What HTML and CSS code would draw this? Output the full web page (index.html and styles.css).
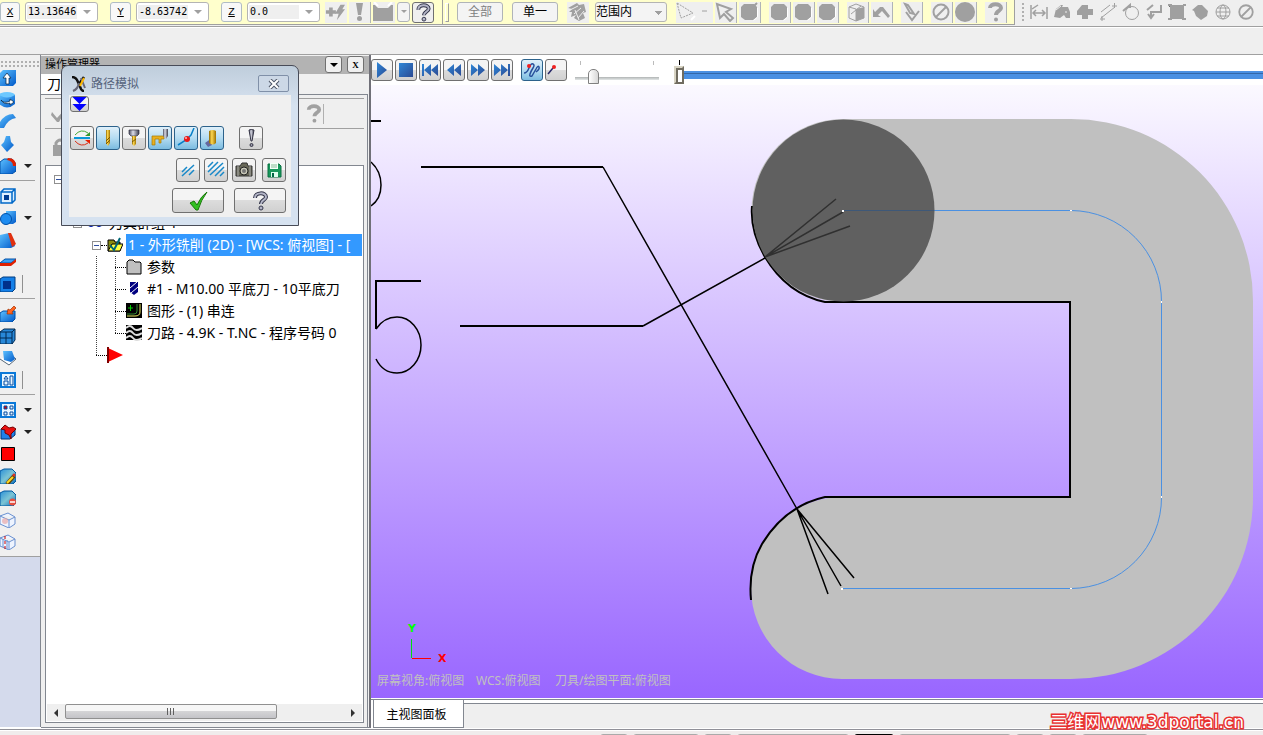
FILE: index.html
```html
<!DOCTYPE html>
<html lang="zh-CN">
<head>
<meta charset="utf-8">
<title>路径模拟</title>
<link rel="stylesheet" href="styles.css">
</head>
<body>
<svg class="defs" aria-hidden="true">
  <defs>
    <linearGradient id="blue" x1="0" y1="0" x2="1" y2="1"><stop offset="0" stop-color="#5cc0ff"/><stop offset="1" stop-color="#0058c8"/></linearGradient>
    <linearGradient id="teal" x1="0" y1="0" x2="1" y2="1"><stop offset="0" stop-color="#2a90d8"/><stop offset=".5" stop-color="#7cc4d4"/><stop offset="1" stop-color="#0868b8"/></linearGradient>
    <linearGradient id="play" x1="0" y1="0" x2="1" y2="1"><stop offset="0" stop-color="#2f86d6"/><stop offset="1" stop-color="#2a4a94"/></linearGradient>
    <linearGradient id="sky" x1="0" y1="0" x2="0" y2="1"><stop offset="0" stop-color="#fbf9ff"/><stop offset="1" stop-color="#9966ff"/></linearGradient>
    <linearGradient id="gold" x1="0" y1="0" x2="1" y2="0"><stop offset="0" stop-color="#8c6400"/><stop offset=".4" stop-color="#ffd850"/><stop offset="1" stop-color="#9c7000"/></linearGradient>
    <linearGradient id="steel" x1="0" y1="0" x2="1" y2="0"><stop offset="0" stop-color="#4a4c60"/><stop offset=".4" stop-color="#dcdde8"/><stop offset="1" stop-color="#3c3e50"/></linearGradient>
    <symbol id="hex" viewBox="0 0 20 20"><path d="M5 2h10l3 3v10l-4 3H6l-4-3V5z" fill="#a0a0a0"/><path d="M18.500 6v9l-4 3.500" fill="none" stroke="#fff"/></symbol>
    <symbol id="no" viewBox="0 0 20 20"><circle cx="10" cy="10" r="7.500" fill="none" stroke="#a0a0a0" stroke-width="2"/><path d="M5 15L15 5" stroke="#a0a0a0" stroke-width="2"/></symbol>
    <symbol id="qmark" viewBox="0 0 20 20"><path d="M5 6c0-5 11-5 11 0 0 3-5 3-5 7" fill="none" stroke="#a0a0a0" stroke-width="4"/><circle cx="11" cy="17.500" r="2" fill="#a0a0a0"/></symbol>
    <symbol id="help" viewBox="0 0 20 20"><path d="M5 7c0-6 11-6 11-1 0 3-5 3-5 7" fill="none" stroke="#34364a" stroke-width="4"/><path d="M5 7c0-6 11-6 11-1 0 3-5 3-5 7" fill="none" stroke="#b4b6c8" stroke-width="2"/><circle cx="11" cy="17" r="2" fill="#b4b6c8" stroke="#34364a"/></symbol>
  </defs>
</svg>

<header class="topbar">
  <div class="coords">
    <button class="axis first">X</button>
    <div class="combo"><input aria-label="X" value="13.13646"><button aria-label="X 列表" class="arrow"></button></div>
    <button class="axis">Y</button>
    <div class="combo"><input aria-label="Y" value="-8.63742"><button aria-label="Y 列表" class="arrow"></button></div>
    <button class="axis">Z</button>
    <div class="combo"><input aria-label="Z" value="0.0"><button aria-label="Z 列表" class="arrow"></button></div>
    <div class="set s1">
      <button class="ico" aria-label="快速点"><svg viewBox="0 0 22 20"><path d="M1 10h11M6.500 5v10" stroke="#a0a0a0" stroke-width="4"/><path d="M17 2h5l-3 5h3l-9 12 2-7h-4z" fill="#a0a0a0"/></svg></button>
      <button class="ico line" aria-label="选项"><svg viewBox="0 0 20 20"><path d="M7 1h7l-2 12H9z" fill="#a0a0a0"/><circle cx="10.500" cy="16.500" r="2.500" fill="#a0a0a0"/></svg></button>
      <button class="ico" aria-label="自动抓点"><svg viewBox="0 0 20 20"><path d="M0 3h2l3 3h10l3-3h2v16H0z" fill="#a0a0a0"/><path d="M1 0l4 4M19 0l-4 4" stroke="#fff" stroke-width="2"/></svg></button>
      <button class="mini arrow" aria-label="抓点列表"></button>
      <button class="ico framed" aria-label="帮助"><svg viewBox="0 0 20 20"><use href="#help"/></svg></button>
    </div>
  </div>
  <div class="selection">
    <i class="grip"></i>
    <button class="word dim">全部</button>
    <button class="word">单一</button>
    <button class="ico" aria-label="实体"><svg viewBox="0 0 20 20"><path d="M1 6l9-5 2 2 5-1 2 8-3 1 2 5-6 3-5-3 2-3-5 2 1-5-3 0 3-3z" fill="#a0a0a0"/><path d="M3 8l8-4M7 12l7-6M11 16l6-7M8 8l4 10" stroke="#eee"/></svg></button>
    <select aria-label="选择范围"><option>范围内</option></select>
    <div class="set s2">
      <button class="ico wide" aria-label="窗选"><svg viewBox="0 0 36 20"><path d="M1 1l4 15 12-5z" fill="none" stroke="#a0a0a0" stroke-dasharray="2 1"/><path d="M26 9h5" stroke="#a0a0a0"/><path d="M15 18l4-4" stroke="#fff" stroke-width="2"/></svg></button>
      <button class="ico line" aria-label="选择"><svg viewBox="0 0 20 20"><path d="M2 2l3 14 4-4 6 7 3-3-7-6 5-3z" fill="#efefef" stroke="#a0a0a0" stroke-width="2"/></svg></button>
      <button class="ico line" aria-label="标准选择"><svg viewBox="0 0 20 20"><use href="#hex"/><path d="M13 6l5-5" stroke="#a0a0a0" stroke-width="2"/></svg></button>
    </div>
    <div class="set s3">
      <button class="ico line" aria-label="边界"><svg viewBox="0 0 20 20"><use href="#hex"/></svg></button>
      <button class="ico line" aria-label="面"><svg viewBox="0 0 20 20"><use href="#hex"/></svg></button>
      <button class="ico line" aria-label="主体"><svg viewBox="0 0 20 20"><use href="#hex"/></svg></button>
    </div>
    <div class="set s4">
      <button class="ico line" aria-label="背面"><svg viewBox="0 0 20 20"><path d="M2 5l7-3 8 3v11l-8 3-7-3z" fill="#efefef" stroke="#a0a0a0"/><path d="M9 7l8-2v11l-8 3z" fill="#a0a0a0"/><path d="M2 5l7 2v12M4 12l10-8" stroke="#a0a0a0" fill="none"/></svg></button>
      <button class="ico line" aria-label="撤销"><svg viewBox="0 0 20 20"><path d="M2 7v8h8l-3-2 4-4 6 7 2-2-7-9h-3L4 10z" fill="#a0a0a0"/></svg></button>
    </div>
    <div class="set s4">
      <button class="ico line" aria-label="验证选择"><svg viewBox="0 0 20 20"><path d="M4 2l3 1 6 9-4-1zM5 10l6 8 7-9" fill="none" stroke="#a0a0a0" stroke-width="2"/></svg></button>
    </div>
    <div class="set s4">
      <button class="ico line" aria-label="取消"><svg viewBox="0 0 20 20"><use href="#no"/></svg></button>
      <button class="ico line" aria-label="确定"><svg viewBox="0 0 20 20"><circle cx="10" cy="10" r="10" fill="#a0a0a0"/></svg></button>
    </div>
    <div class="set s4">
      <button class="ico line" aria-label="选择帮助"><svg viewBox="0 0 20 20"><use href="#qmark"/></svg></button>
    </div>
  </div>
  <div class="analysis">
    <i class="dots"></i>
    <button aria-label="距离"><svg viewBox="0 0 18 18"><path d="M1 2v14M17 4v12M3 10h12M6 7l-3 3 3 3M12 7l3 3-3 3" fill="none" stroke="#a0a0a0" stroke-width="1.500"/><path d="M2 6l6-4" stroke="#a0a0a0" stroke-width="1.500"/></svg></button>
    <button aria-label="动态"><svg viewBox="0 0 18 18"><path d="M1 14L3 6l5-4h2l-1 2 6 0 2 5v6h-4l-2-3-4 3z" fill="#a0a0a0"/><path d="M3 7l5-4M12 9h2" stroke="#eee"/></svg></button>
    <button aria-label="体积"><svg viewBox="0 0 18 18"><path d="M1 8l5-6h6v4h5v6h-5v4H6v-4H1z" fill="#a0a0a0"/></svg></button>
    <button aria-label="串连"><svg viewBox="0 0 18 18"><path d="M2 15L16 4M2 9l9-7M1 16h5M13 3h5M15.500 0v5M3 13v5" fill="none" stroke="#a0a0a0"/></svg></button>
    <button aria-label="外形"><svg viewBox="0 0 18 18"><circle cx="10" cy="10" r="6.500" fill="none" stroke="#a0a0a0"/><path d="M1 8l7-6v3" fill="none" stroke="#a0a0a0" stroke-width="2"/></svg></button>
    <button aria-label="角度"><svg viewBox="0 0 18 18"><path d="M16 2v7H6v6M3 11l3 4 3-4M2 7l6-5" fill="none" stroke="#a0a0a0" stroke-width="2"/></svg></button>
    <button aria-label="曲面"><svg viewBox="0 0 18 18"><path d="M2 2h14v14H2z" fill="#a0a0a0"/><path d="M0 2h3v3M15 2h3M0 16h4M14 16h4" stroke="#a0a0a0" stroke-width="2"/></svg></button>
    <button aria-label="实体检查"><svg viewBox="0 0 18 18"><path d="M1 7l6-5h4l6 6-1 5-6 4-5-4-2-5z" fill="#a0a0a0"/></svg></button>
    <button aria-label="网格"><svg viewBox="0 0 18 18"><circle cx="9" cy="9" r="7" fill="none" stroke="#a0a0a0"/><ellipse cx="9" cy="9" rx="3" ry="7" fill="none" stroke="#a0a0a0"/><path d="M2 9h14M3 5h12M3 13h12" stroke="#a0a0a0"/></svg></button>
    <button aria-label="清除"><svg viewBox="0 0 20 20"><use href="#no"/></svg></button>
  </div>
</header>
<div class="ribbon"></div>

<main class="work">
  <nav class="side">
    <div class="tools">
      <i class="dotrow"></i>
      <button class="tool" aria-label="拉伸"><svg viewBox="0 0 16 16"><path d="M0 3l3-3h13v13l-3 3H0z" fill="url(#blue)"/><path d="M6 14V8H3l4-5 4 5H9v6z" fill="#fff" stroke="#024" stroke-width=".7"/></svg></button>
      <button class="tool" aria-label="旋转"><svg viewBox="0 0 16 16"><ellipse cx="7" cy="3" rx="8" ry="3" fill="#6cc8ff"/><path d="M-1 3v9q8 7 16 0V3q-8 5-16 0z" fill="url(#blue)"/><path d="M1 8q3 4 9 1V7l4 3-4 3v-2q-6 2-9-3z" fill="#fff" stroke="#024" stroke-width=".7"/></svg></button>
      <button class="tool" aria-label="扫描"><svg viewBox="0 0 16 16"><path d="M0 8Q5 0 13 0l3 4Q8 5 4 14H0z" fill="url(#blue)"/></svg></button>
      <button class="tool" aria-label="举升"><svg viewBox="0 0 16 16"><path d="M6 0h4l1 6 3 3-7 7-6-7 3-3z" fill="url(#blue)"/></svg></button>
      <button class="tool drop" aria-label="圆角"><svg viewBox="0 0 16 16"><path d="M0 4l4-3h8l4 5v7l-4 3H0z" fill="url(#blue)" stroke="#0050a8"/><path d="M8 0q8 0 8 8h-3q0-5-6-6z" fill="#e02000"/></svg></button>
      <hr>
      <button class="tool" aria-label="抽壳"><svg viewBox="0 0 16 16"><path d="M1 4h11v11H1zM1 4l3-3h11v11l-3 3M12 4l3-3" fill="#dff0ff" stroke="#0068c8" stroke-width="1.500"/><path d="M4 7h5v5H4z" fill="#003c90"/></svg></button>
      <button class="tool drop" aria-label="布尔"><svg viewBox="0 0 16 16"><path d="M6 1h10v11l-3 2H6z" fill="url(#blue)"/><circle cx="6" cy="9" r="5.500" fill="#1e8cf0" stroke="#0050a8"/></svg></button>
      <button class="tool" aria-label="牵引"><svg viewBox="0 0 16 16"><path d="M0 3l9-2 6 13-4 2H0z" fill="url(#blue)"/><path d="M8 1h3l5 11-4 3z" fill="#e03010"/></svg></button>
      <button class="tool" aria-label="修剪"><svg viewBox="0 0 16 16"><path d="M0 9l5-4h11l-5 4z" fill="#3aa0f4" stroke="#0050a8"/><path d="M0 9h11l5-4v3l-5 4H0z" fill="#e02000"/></svg></button>
      <button class="tool bar" aria-label="加厚"><svg viewBox="0 0 16 16"><path d="M0 3l3-2h12v12l-3 3H0z" fill="#1480e8" stroke="#003c80"/><path d="M3 5h8v8H3z" fill="#00308c"/></svg></button>
      <hr>
      <button class="tool" aria-label="移除面"><svg viewBox="0 0 16 16"><path d="M0 7l3-2h12v8l-3 3H0z" fill="url(#blue)" stroke="#0050a8"/><path d="M7 8l1-5 2 1 4-4 2 2-4 4 1 2z" fill="#ff6420" stroke="#a03000" stroke-width=".7"/></svg></button>
      <button class="tool" aria-label="网格体"><svg viewBox="0 0 16 16"><path d="M0 4l4-3h11v11l-3 4H0z" fill="#2888d8" stroke="#002850"/><path d="M0 4h12v12M12 4l3-3M6 4v12M0 10h12" stroke="#002850" fill="none"/></svg></button>
      <button class="tool" aria-label="曲面薄片"><svg viewBox="0 0 16 16"><path d="M0 9l9 6 7-6-5-4" fill="#fff" stroke="#567" /><path d="M3 1h9l3 8-4 3-7-2z" fill="url(#blue)"/></svg></button>
      <button class="tool bar" aria-label="三视图"><svg viewBox="0 0 16 16"><path d="M1 1h14v14H1z" fill="#e8f6ff" stroke="#0a78d8" stroke-width="2"/><path d="M4 7l2-3 2 3zM4 9h4v4H4zM10 4h3v9h-3z" fill="none" stroke="#0048a0"/></svg></button>
      <hr>
      <button class="tool drop" aria-label="阵列"><svg viewBox="0 0 16 16"><path d="M1 1h14v14H1z" fill="#e8f6ff" stroke="#0a78d8" stroke-width="2"/><path d="M4 4h3v3H4z" fill="#e00000"/><path d="M4 4h3v3H4zM10 4h3v3h-3zM4 10h3v3H4zM10 10h3v3h-3z" fill="none" stroke="#0048a0"/></svg></button>
      <button class="tool drop" aria-label="特征"><svg viewBox="0 0 16 16"><path d="M1 5l5-3v7l4-1 5-3v6l-5 4H1z" fill="#2080e8" stroke="#003070"/><path d="M1 5l4-4 4 3 4-1 3 2-5 5v5l-2-4-4-2V6z" fill="#e81010" stroke="#700"/></svg></button>
      <button class="tool" aria-label="颜色"><svg viewBox="0 0 16 16"><path d="M1.500 1.500h13v13h-13z" fill="#f00" stroke="#000"/></svg></button>
      <button class="tool" aria-label="编辑实体"><svg viewBox="0 0 16 16"><path d="M0 3l4-2h8l4 4v8l-3 3H0z" fill="url(#teal)" stroke="#0058a0"/><path d="M7 16l7-8" stroke="#640" stroke-width="4"/><path d="M7 15l6-6" stroke="#ffd820" stroke-width="2"/><circle cx="14" cy="7" r="1.500" fill="#e03020"/></svg></button>
      <button class="tool" aria-label="删除实体"><svg viewBox="0 0 16 16"><path d="M0 3l4-2h8l4 4v8l-3 3H0z" fill="url(#teal)" stroke="#0058a0"/><circle cx="12.500" cy="12" r="3.500" fill="#e85040"/><path d="M10 12h5" stroke="#fff" stroke-width="1.500"/></svg></button>
      <button class="tool" aria-label="线框"><svg viewBox="0 0 16 16"><path d="M0 4l8-3 7 4v7l-6 4-9-4zM0 4l9 4 6-3M9 8v8" fill="#eef4ff" stroke="#6a90d0"/><circle cx="5" cy="9" r="3" fill="#e8a8a8" fill-opacity=".7"/></svg></button>
      <button class="tool" aria-label="剖面"><svg viewBox="0 0 16 16"><path d="M0 4l8-3 7 4v7l-6 4-9-4zM0 4l9 4 6-3M9 8v8" fill="#eef4ff" stroke="#6a90d0"/><path d="M3 5v8M7 6v9" stroke="#6a90d0"/><path d="M5 2v13" stroke="#c00" stroke-dasharray="3 2"/></svg></button>
    </div>
  </nav>

  <aside class="manager">
    <div class="caption"><h2>操作管理器</h2><button class="capbtn" aria-label="菜单"><i class="tri"></i></button><button class="capbtn close" aria-label="关闭">X</button></div>
    <div class="tabs"><button class="tab">刀路</button></div>
    <div class="frame">
      <div class="oprow"><button aria-label="选择全部"><svg viewBox="0 0 20 20"><path d="M2 8l5 6L18 2l-9 16H7L1 11z" fill="#a0a0a0"/></svg></button><button class="right" aria-label="帮助"><svg viewBox="0 0 20 20"><use href="#qmark"/></svg></button></div>
      <div class="oprow second"><button aria-label="锁定"><svg viewBox="0 0 20 20"><path d="M3 8h14v11H3z" fill="#a0a0a0"/><path d="M6 9V6q4-6 8 0v3" fill="none" stroke="#a0a0a0" stroke-width="3"/></svg></button></div>
      <div class="treebox">
        <ul class="tree">
          <li><i class="box"></i></li>
          <li></li>
          <li class="group"><i class="box"></i><svg class="g" viewBox="0 0 18 16"><circle cx="5" cy="8" r="3.500" fill="#0ff" stroke="#00a"/><circle cx="13" cy="8" r="3.500" fill="#0ff" stroke="#00a"/></svg><span>刀具群组-1</span></li>
          <li class="op"><i class="box"></i><i class="h"></i><svg viewBox="0 0 16 16"><path d="M1 3h6l1 2h5v9H1z" fill="#8a8a10" stroke="#000"/><path d="M1 14l4-7h11l-3 7z" fill="#ffff40" stroke="#000"/><path d="M3 8l4 5 6-12" fill="none" stroke="#006878" stroke-width="2"/></svg><span class="picked">1 - 外形铣削 (2D) - [WCS: 俯视图] - [</span></li>
          <li class="leaf"><i class="h"></i><svg viewBox="0 0 16 16"><path d="M1 3l2-2h4l2 2h5l1 1v11H1z" fill="#c0c0c0" stroke="#000"/></svg><span>参数</span></li>
          <li class="leaf"><i class="h"></i><svg viewBox="0 0 16 16"><path d="M4 1h8v10l-4 3-4-3z" fill="#000080"/><path d="M4 7l7-6M5 12l7-6" stroke="#fff"/></svg><span>#1 - M10.00 平底刀 - 10平底刀</span></li>
          <li class="leaf"><i class="h"></i><svg viewBox="0 0 16 16"><path d="M0 0h16v15H0z" fill="#000"/><path d="M14 1v8q0 4-5 4H1" fill="none" stroke="#e8e860"/><path d="M11 1v7q0 3-3 3H1" fill="none" stroke="#383"/><path d="M2 5h5M4.500 2v6" stroke="#0c0"/></svg><span>图形 - (1) 串连</span></li>
          <li class="leaf last"><i class="h"></i><svg viewBox="0 0 16 16"><path d="M0 0h16v15H0z" fill="#000"/><path d="M0 3q4-4 7 0t9 0M0 8q4-4 7 0t9 0M0 13q4-4 7 0t9 0" fill="none" stroke="#ddd" stroke-width="2"/></svg><span>刀路 - 4.9K - T.NC - 程序号码 0</span></li>
          <li class="end"><i class="h"></i><svg viewBox="0 0 16 16"><path d="M1 1l15 7-15 7z" fill="#f00"/><path d="M0 0h2v16H0z" fill="#800000"/></svg></li>
        </ul>
        <div class="hscroll"><button aria-label="向左"><i class="lt"></i></button><div class="thumb"></div><button class="rightbtn" aria-label="向右"><i class="rt"></i></button></div>
      </div>
    </div>

    <section class="dialog" role="dialog" aria-labelledby="dlg">
      <header><svg viewBox="0 0 16 16"><path d="M1 1q4 0 6 5l3 7q1 2 3 2M13 1L8 8" fill="none" stroke="#111" stroke-width="2.500"/><path d="M2 15q5-2 6-8M10 2l4 10" fill="none" stroke="#667" stroke-width="2"/><path d="M9 10l4-8" stroke="#ffb800" stroke-width="2"/></svg><h1 id="dlg">路径模拟</h1><button aria-label="关闭"><svg viewBox="0 0 12 10"><path d="M2 1l8 8M10 1L2 9" stroke="#4c5566" stroke-width="4"/><path d="M2 1l8 8M10 1L2 9" stroke="#fff" stroke-width="2"/></svg></button></header>
      <div class="inside">
        <button class="expand" aria-label="展开"><svg viewBox="0 0 16 14"><path d="M1 0h14L8 7zM1 7h14l-7 7z" fill="#00f"/></svg></button>
        <div class="row r1">
          <button class="b" aria-label="循环"><svg viewBox="0 0 20 20"><path d="M3 7q6-7 13-2" fill="none" stroke="#48a838"/><path d="M18 8h-5l5-4z" fill="#38982c"/><path d="M2 10h16" stroke="#0a98d8" stroke-width="2"/><path d="M3 13q6 7 13 2" fill="none" stroke="#d83018"/><path d="M18 12h-5l5 4z" fill="#e82000"/></svg></button>
          <button class="b on" aria-label="刀具"><svg viewBox="0 0 20 20"><path d="M8 2h4v13l-2 3-2-3z" fill="url(#gold)"/><path d="M8 13l4-4M8 16l4-4" stroke="#7c5800"/></svg></button>
          <button class="b" aria-label="夹头"><svg viewBox="0 0 20 20"><path d="M5 2h10v4l-2 2H7L5 6z" fill="url(#steel)" stroke="#334" stroke-width=".7"/><path d="M8 8h4v8l-2 2-2-2z" fill="url(#gold)"/><path d="M8 14l4-3" stroke="#7c5800"/></svg></button>
          <button class="b on" aria-label="快速移动"><svg viewBox="0 0 20 20"><path d="M2 8h12v3h-3v4H9v-4H5v6H2z" fill="#e8b020" stroke="#a87800" stroke-width=".7"/><path d="M13 1h5v7l-2 3-3-3z" fill="url(#steel)"/></svg></button>
          <button class="b on" aria-label="端点"><svg viewBox="0 0 20 20"><path d="M2 17l8-5 5-5 3-7" fill="none" stroke="#0880c8" stroke-width="1.500"/><circle cx="11" cy="11" r="3" fill="#e81818"/><circle cx="10" cy="10" r="1" fill="#fbb"/></svg></button>
          <button class="b on" aria-label="着色"><svg viewBox="0 0 20 20"><path d="M3 15l7-5v7l-4 2z" fill="#6468a0"/><path d="M7 3q4-2 7 0v12q-3 3-7 0z" fill="url(#gold)"/></svg></button>
          <button class="b apart" aria-label="参数设置"><svg viewBox="0 0 20 20"><path d="M8 2q2-1 5 0l-2 11h-1z" fill="url(#steel)" stroke="#334"/><circle cx="10.500" cy="17" r="1.500" fill="#99a" stroke="#334"/></svg></button>
        </div>
        <div class="row r2">
          <button class="b" aria-label="限制路径"><svg viewBox="0 0 20 20"><path d="M4 12l5-5M4 16L16 5M11 15l5-5" stroke="#1888c8" stroke-width="1.500"/></svg></button>
          <button class="b" aria-label="全部路径"><svg viewBox="0 0 20 20"><path d="M2 7l5-5M2 12L12 2M4 15L17 3M9 16l9-9M14 16l4-4" stroke="#1888c8" stroke-width="1.500"/></svg></button>
          <button class="b" aria-label="保存图片"><svg viewBox="0 0 20 20"><path d="M2 6h4l2-3h5l1 3h4v10H2z" fill="#686858" stroke="#333"/><circle cx="10" cy="11" r="4" fill="#c8c8b8" stroke="#222"/><circle cx="10" cy="11" r="2" fill="#777"/><path d="M4 6v10M16 6v10" stroke="#aaa"/></svg></button>
          <button class="b save" aria-label="保存"><svg viewBox="0 0 20 20"><path d="M4 4h11l2 2v11H4z" fill="#18985c" stroke="#087040"/><path d="M6 3h8v6H6z" fill="#f4fff8"/><path d="M7 5h6M7 7h6" stroke="#8b9"/><path d="M7 12h7v5H7z" fill="#dfe"/><path d="M8 13h2v4H8z" fill="#064"/></svg></button>
        </div>
        <div class="row r3">
          <button class="b big" aria-label="确定"><svg viewBox="0 0 20 20"><path d="M2 12l4-2 3 4Q13 5 19 1q-6 8-9 18H8z" fill="#30c020" stroke="#187808"/></svg></button>
          <button class="b big" aria-label="帮助"><svg viewBox="0 0 20 20"><use href="#help"/></svg></button>
        </div>
      </div>
    </section>
  </aside>

  <section class="stage">
    <div class="player">
      <button class="b" aria-label="播放"><svg viewBox="0 0 20 20"><path d="M5 2l10 8-10 8z" fill="url(#play)"/></svg></button>
      <button class="b" aria-label="停止"><svg viewBox="0 0 20 20"><path d="M3 3h14v14H3z" fill="url(#play)"/></svg></button>
      <button class="b" aria-label="到开头"><svg viewBox="0 0 20 20"><path d="M2 4h2v12H2zM11 4v12l-7-6zM18 4v12l-7-6z" fill="url(#play)"/></svg></button>
      <button class="b" aria-label="后退"><svg viewBox="0 0 20 20"><path d="M10 4v12l-7-6zM17 4v12l-7-6z" fill="url(#play)"/></svg></button>
      <button class="b" aria-label="前进"><svg viewBox="0 0 20 20"><path d="M3 4v12l7-6zM10 4v12l7-6z" fill="url(#play)"/></svg></button>
      <button class="b" aria-label="到结尾"><svg viewBox="0 0 20 20"><path d="M2 4v12l7-6zM9 4v12l7-6zM16 4h2v12h-2z" fill="url(#play)"/></svg></button>
      <button class="b on trace" aria-label="显示轨迹"><svg viewBox="0 0 20 20"><path d="M2 13q3 0 5-5t4-4 0 4-3 6 2 2l4-7q2-4 3-2t-3 5" fill="none" stroke="#28509c" stroke-width="1.500"/><circle cx="7" cy="6" r="2" fill="#f02020"/></svg></button>
      <button class="b" aria-label="运行"><svg viewBox="0 0 20 20"><path d="M2 14l5-6" stroke="#282868" stroke-width="1.500"/><circle cx="8" cy="7" r="2" fill="#f02020"/></svg></button>
      <input class="speed" type="range" aria-label="速度" min="0" max="100" value="18">
      <input class="progress" type="range" aria-label="进度" min="0" max="100" value="0">
    </div>
    <svg class="canvas" viewBox="371 85 892 613" preserveAspectRatio="xMinYMin slice">
      <rect x="371" y="85" width="892" height="613" fill="url(#sky)"/>
      <path d="M843 119H1071A182 182 0 0 1 1253 301V497A182 182 0 0 1 1071 679H842A91 91 0 0 1 842 497H1070V302H843A91 91 0 0 1 843 119Z" fill="#c0c0c0"/>
      <path d="M843 210.500H1071A91 91 0 0 1 1161.500 302V497A91 91 0 0 1 1071 588.500H842" fill="none" stroke="#4a90e2"/>
      <g fill="none" stroke="#000" stroke-width="2">
        <path d="M752 206Q750 231 765 257Q787 294 825 302H1070V497H825Q785 506 762 544Q748 568 751 600"/>
        <path d="M603 167L797 509L841 586M797 509L828 594M797 509L854 578" stroke-width="1.500"/>
        <path d="M421 167H603M371 121H381M460 326H643M421 281H376V329"/>
        <path d="M643 326L765 258L843 211" stroke-width="1.500"/>
        <path d="M371 162Q381 171 381 185T371 206M376 329Q384 317 397 317A24 28 0 0 1 397 373Q383 373 376 359" stroke-width="1.500"/>
      </g>
      <circle cx="843.500" cy="210.500" r="91" fill="#606060"/>
      <path d="M843 210.500H934" stroke="#3e5878"/>
      <path d="M765 257L836 199M765 257L843 212M765 257L850 226" stroke="#303030" stroke-width="1.500"/>
      <path d="M842 210h2v2h-2zM841 588h2v2h-2zM1070 210h2v1h-2zM1161 301h1v2h-1zM1161 496h1v2h-1zM1070 588h2v1h-2z" fill="#fff"/>
      <path d="M411.500 639V658" stroke="#00e010"/>
      <path d="M412 658.500H431" stroke="#f00"/>
      <text class="ax" x="408" y="632" fill="#0f0">Y</text>
      <text class="ax" x="438" y="662" fill="#f00">X</text>
      <g class="hud"><text x="377" y="685">屏幕视角:俯视图</text><text x="476" y="685">WCS:俯视图</text><text x="555" y="685">刀具/绘图平面:俯视图</text></g>
    </svg>
    <div class="viewtabs"><button>主视图面板</button><div class="rest"><span class="mark">三维网www.3dportal.cn</span></div></div>
  </section>
</main>
<footer class="status"><i></i><i class="w2"></i><i></i><i class="w3"></i><i class="ink"></i><i class="w3"></i><i></i><i></i><i class="w2"></i></footer>
</body>
</html>
```
FILE: styles.css
```css
* { box-sizing: border-box; }
body { margin: 0; height: 100vh; display: flex; flex-direction: column; overflow: hidden; background: #efefef; color: #000; font: 12px/16px "Liberation Sans", "Noto Sans CJK SC", sans-serif; }
button, input, select { font: inherit; color: inherit; margin: 0; padding: 0; border: 0; background: none; }
svg { display: block; }
h1, h2, ul { margin: 0; padding: 0; font: inherit; list-style: none; }
.defs { position: absolute; width: 0; height: 0; }

/* top toolbars */
.topbar { display: flex; height: 27px; flex: none; border-bottom: 1px solid #a0a0a0; background: #efefef; overflow: hidden; }
.coords, .selection { display: flex; align-items: center; height: 25px; background: #ffffcc; border-bottom: 1px solid #a0a0a0; border-right: 1px solid #a0a0a0; flex: none; }
.axis { width: 21px; height: 20px; margin: 0 5px 0 12px; border: 1px solid #b0bcc4; border-radius: 3px; background: #f8f8f8; font: 11px/16px "Liberation Mono", monospace; text-decoration: underline; }
.axis.first { margin-left: 0; width: 20px; }
.combo { display: flex; width: 73px; height: 20px; padding: 2px 1px; border: 1px solid #b4b4b4; border-radius: 3px; background: #fff; }
.combo input { width: 50px; height: 14px; background: #efefef; font: 10px/14px "DejaVu Sans Mono", monospace; padding-left: 1px; }
.arrow { flex: 1; display: flex; align-items: center; justify-content: center; }
.arrow::after { content: ""; border: 4px solid transparent; border-top-color: #a0a0a0; border-bottom: 0; }
.set { display: flex; gap: 2px; }
.s1 { margin: 0 8px 0 5px; }
.s2 { margin-left: 9px; }
.s3, .s4 { margin-left: 8px; }
.ico { width: 22px; height: 21px; background: #efefef; border-right: 1px solid transparent; }
.ico svg { width: 20px; height: 20px; }
.ico.line { border-right-color: #b0b4b8; }
.ico.wide { width: 37px; }
.ico.wide svg { width: 36px; }
.ico.framed { border: 1px solid #707070; border-radius: 3px; }
.ico.framed svg { height: 19px; }
.mini { flex: none; width: 13px; height: 20px; border: 1px solid #b0b4b8; border-radius: 3px; background: #f4f4f4; }
.mini::after { border-width: 3px; border-bottom: 0; }
.selection { padding-right: 7px; }
.grip { width: 4px; height: 19px; margin: 0 8px 0 2px; border: 1px solid #a0a0a0; border-left-color: #fff; border-top-color: #fff; }
.word { width: 46px; height: 20px; margin-right: 9px; border: 1px solid #b0b4b8; border-radius: 3px; background: #f4f4f4; }
.word.dim { color: #808080; }
.selection > select { width: 72px; height: 20px; margin-left: 6px; border: 1px solid #b4b4b4; border-radius: 3px; appearance: none; background: conic-gradient(from -45deg at 50% 100%, #a0a0a0 90deg, transparent 0) 58px 8px / 8px 4px no-repeat, #f4f4f4; }
.analysis { display: flex; align-items: center; gap: 5px; height: 24px; padding-left: 6px; }
.analysis button { width: 18px; height: 18px; }
.dots, .dotrow { background: radial-gradient(#b0b0b0 1px, transparent 1px) 0 0 / 4px 4px; }
.dots { width: 4px; height: 20px; }
.ribbon { height: 28px; flex: none; border-bottom: 1px solid #a0a0a0; border-top: 1px solid #fff; }
.work { flex: 1; min-height: 0; display: flex; background: #fff; border-bottom: 1px solid #909098; }

/* solids toolbar */
.side { width: 41px; flex: none; background: #d4daec; border-right: 1px solid #828790; margin-bottom: 2px; }
.tools { display: flex; flex-direction: column; background: #f0f0f0; border-bottom: 1px solid #a0a0a0; padding: 5px 0 3px; }
.dotrow { height: 7px; }
.tool { display: flex; align-items: center; gap: 8px; height: 22px; }
.tool svg { width: 16px; height: 16px; }
.tool.drop::after { content: ""; border: 4px solid transparent; border-top-color: #222; border-bottom: 0; }
.tool.bar::after { content: ""; height: 18px; margin-left: -2px; border-left: 1px solid #909090; }
.tools hr { width: 35px; height: 8px; margin: 0; border: 0; background: linear-gradient(#a0a0a0, #a0a0a0) 0 3px / 35px 1px no-repeat; }

/* operations manager */
.manager { position: relative; width: 330px; flex: none; display: flex; flex-direction: column; background: #f0f0f0; border-right: 2px solid #707078; margin-bottom: 1px; border-bottom: 1px solid #828790; }
.caption { display: flex; height: 18px; margin-top: 1px; padding: 0 5px 0 4px; gap: 5px; background: #b3b3b3; }
.caption h2 { flex: 1; font-size: 11px; line-height: 16px; }
.capbtn { display: grid; place-items: center; width: 17px; height: 17px; border: 1px solid #707070; border-radius: 3px; background: #f0f0f0; }
.close { font: bold 9px/12px "Liberation Serif", serif; }
.tri { border: 4px solid transparent; border-top-color: #000; border-bottom: 0; }
.tabs { height: 20px; }
.tab { height: 20px; width: 80px; padding-left: 6px; text-align: left; font-size: 14px; background: #fff; }
.frame { flex: 1; min-height: 0; display: flex; flex-direction: column; margin-right: 1px; padding: 3px 3px 4px 4px; border-top: 1px solid #828790; border-right: 1px solid #828790; background: #efefef; }
.oprow { display: flex; justify-content: space-between; align-items: center; height: 31px; padding: 0 40px 0 5px; border-top: 1px solid #a0a0a0; border-bottom: 1px solid #a0a0a0; }
.oprow button { width: 20px; height: 20px; }
.oprow .right { border-right: 1px solid #b0b0b0; }
.second { border: 0; height: 36px; }
.treebox { flex: 1; min-height: 0; display: flex; flex-direction: column; border: 1px solid #828790; background: #fff; padding: 2px 1px 1px; }
.tree { flex: 1; min-height: 0; overflow: hidden; font: 14px/22px "Noto Sans", "Noto Sans CJK SC", sans-serif; white-space: nowrap; }
.tree li { display: flex; align-items: center; height: 22px; padding-left: 7px; }
.tree svg { width: 16px; height: 16px; flex: none; }
.tree .g { width: 18px; margin-left: 4px; }
.tree .box { width: 9px; height: 9px; flex: none; border: 1px solid #909090; background: linear-gradient(#3050a0, #3050a0) 1px 3px / 5px 1px no-repeat, #fff; }
.tree .group { padding-left: 26px; }
.tree .op { padding-left: 45px; }
.tree .h { width: 11px; flex: none; border-top: 1px dotted #000; }
.tree .op .h { width: 6px; }
.tree span { padding: 0 2px; margin-left: 3px; }
.tree .picked { background: #3399ff; color: #fff; flex: 1; overflow: hidden; }
.tree .leaf, .tree .end { padding: 0; margin-left: 49px; background: repeating-linear-gradient(#444 0 1px, transparent 1px 2px) 0 0 / 1px 22px no-repeat, repeating-linear-gradient(#444 0 1px, transparent 1px 2px) 19px 0 / 1px 22px no-repeat; }
.tree .last { background-size: 1px 22px, 1px 11px; }
.tree .end { background-size: 1px 11px, 0 0; }
.tree .leaf .h { margin-left: 19px; }
.hscroll { display: flex; height: 17px; background: #efefef; }
.hscroll button { width: 18px; display: grid; place-items: center; }
.hscroll .thumb { width: 212px; height: 15px; border: 1px solid #909090; border-radius: 2px; background: repeating-linear-gradient(90deg, #606060 0 1px, transparent 1px 3px) 101px 3px / 9px 7px no-repeat, linear-gradient(#f6f6f6 50%, #d4d4d6 50%, #c4c4c8); }
.hscroll .rightbtn { margin-left: auto; }
.lt, .rt { border: 4px solid transparent; border-right-color: #333; border-left: 0; }
.rt { border-left: 4px solid #333; border-right: 0; }

/* simulation dialog, floats over the manager */
.dialog { position: absolute; left: 20px; top: 10px; width: 238px; height: 161px; display: flex; flex-direction: column; padding: 0 7px 8px; border: 1px solid #484c58; border-radius: 7px 7px 0 0; background: linear-gradient(#bfcddb, #d6e2f0 40px, #d6e2f0); }
.dialog header { display: flex; align-items: center; height: 29px; padding: 6px 2px 0; gap: 4px; }
.dialog header svg { width: 16px; height: 16px; }
.dialog h1 { flex: 1; color: #56647c; }
.dialog header button { display: grid; place-items: center; width: 31px; height: 17px; border: 1px solid #8090a8; border-radius: 2px; background: #ccd8e6; }
.dialog header button svg { width: 12px; height: 10px; }
.inside { flex: 1; padding: 1px 5px 0 1px; background: #f0f0f0; }
.b, .expand { display: grid; place-items: center; border: 1px solid #707070; border-radius: 3px; background: linear-gradient(#f4f4f4 50%, #dcdcdc 50%, #d0d0d0); }
.expand { width: 19px; height: 16px; }
.expand svg { width: 17px; height: 14px; }
.b { width: 24px; height: 24px; flex: none; }
.b svg { width: 20px; height: 20px; }
.b.on { border-color: #2c628b; background: linear-gradient(#e0f0fa, #b4dcf2 50%, #7cbce0); }
.row { display: flex; }
.r1 { gap: 2px; margin-top: 14px; }
.apart { margin-left: 13px; }
.r2 { gap: 4px; margin-top: 8px; justify-content: flex-end; }
.save { margin-left: 2px; }
.r3 { gap: 10px; margin-top: 6px; justify-content: flex-end; }
.big { width: 52px; height: 25px; }

/* playback and drawing */
.stage { flex: 1; min-width: 0; display: flex; flex-direction: column; }
.player { display: flex; align-items: center; gap: 2px; height: 30px; flex: none; background: #fff; }
.player .b { width: 22px; height: 22px; }
.player .b svg { width: 20px; height: 20px; }
.trace { margin-left: 6px; }
.player input { appearance: none; height: 26px; }
.speed { width: 84px; margin-left: 6px; background: linear-gradient(#bbb, #bbb) 5px 4px / 1px 4px no-repeat, linear-gradient(#bbb, #bbb) 78px 4px / 1px 4px no-repeat, linear-gradient(#b0b4b4, #e4e8e8) 0 20px / 84px 3px no-repeat; }
.speed::-webkit-slider-thumb { appearance: none; width: 11px; height: 15px; margin-top: 12px; border: 1px solid #808080; border-radius: 5px 5px 0 0; background: linear-gradient(90deg, #fff, #d8d8d8); }
.progress { flex: 1; min-width: 0; margin-left: 13px; background: linear-gradient(#000, #000) 5px 3px / 1px 5px no-repeat, linear-gradient(#4a90e2 2px, #3468a8 2px 3px, #4a90e2 3px) 5px 14px / 100% 8px no-repeat; }
.progress::-webkit-slider-thumb { appearance: none; width: 10px; height: 18px; margin-top: 9px; border: 2px solid #d8d4c4; border-right-color: #706c60; border-bottom-color: #706c60; background: linear-gradient(#706c60, #706c60) 0 0 / 6px 2px no-repeat, linear-gradient(90deg, #706c60 2px, #fff 2px); }
.canvas { flex: 1; min-height: 0; width: 100%; }
.ax { font: bold 11px "DejaVu Sans", sans-serif; }
.hud { fill: #c0c0c0; font: 12px "Noto Sans", "Noto Sans CJK SC", sans-serif; }
.viewtabs { display: flex; flex: none; height: 30px; border-top: 1px solid #828790; margin-top: 1px; padding-left: 2px; }
.viewtabs button { width: 91px; height: 28px; padding: 2px 4px 0 0; border: 1px solid #828790; border-top: 0; }
.rest { flex: 1; margin-top: 3px; height: 25px; padding: 8px 19px 0 0; border-top: 1px solid #828790; background: #efefef; text-align: right; }
.mark { color: #fff; font: 17px/20px "DejaVu Sans", "Noto Sans CJK SC", sans-serif; -webkit-text-stroke: 3px #e83030; paint-order: stroke fill; }
.status { display: flex; gap: 5px; height: 5px; flex: none; padding: 3px 0 0 600px; border-top: 1px solid #fff; background: #f0ecec; overflow: hidden; }
.status i { width: 28px; height: 4px; flex: none; border: 1px solid #aaa; border-radius: 3px 3px 0 0; }
.status .w2 { width: 66px; }
.status .w3 { width: 112px; background: #fff; }
.status .ink { width: 40px; background: #000; border-color: #000; }
```
